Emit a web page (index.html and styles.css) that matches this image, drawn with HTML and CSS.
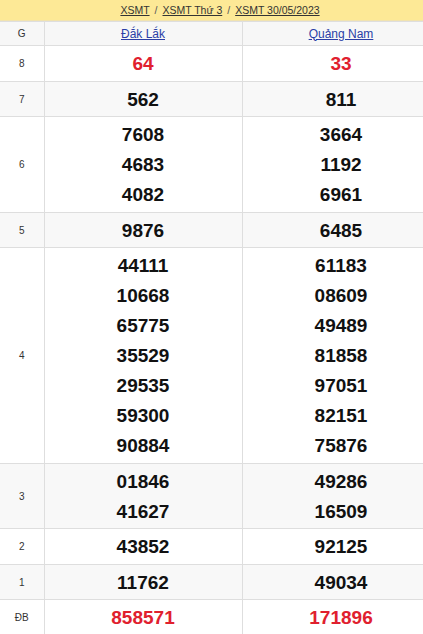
FILE: index.html
```html
<!DOCTYPE html>
<html lang="vi">
<head>
<meta charset="utf-8">
<title>XSMT 30/05/2023</title>
<link rel="stylesheet" href="styles.css">
</head>
<body>
<div class="wrap">
  <div class="crumbs">
    <a href="#">XSMT</a><span class="sep">/</span><a href="#">XSMT Thứ 3</a><span class="sep">/</span><a href="#">XSMT 30/05/2023</a>
  </div>
  <table class="kq">
    <colgroup><col class="c-g"><col class="c-p"><col class="c-p"></colgroup>
    <thead>
      <tr><th class="g">G</th><th><a href="#">Đắk Lắk</a></th><th><a href="#">Quảng Nam</a></th></tr>
    </thead>
    <tbody>
      <tr><td class="g">8</td><td class="red">64</td><td class="red">33</td></tr>
      <tr class="alt"><td class="g">7</td><td>562</td><td>811</td></tr>
      <tr><td class="g">6</td><td>7608<br>4683<br>4082</td><td>3664<br>1192<br>6961</td></tr>
      <tr class="alt"><td class="g">5</td><td>9876</td><td>6485</td></tr>
      <tr><td class="g">4</td><td>44111<br>10668<br>65775<br>35529<br>29535<br>59300<br>90884</td><td>61183<br>08609<br>49489<br>81858<br>97051<br>82151<br>75876</td></tr>
      <tr class="alt"><td class="g">3</td><td>01846<br>41627</td><td>49286<br>16509</td></tr>
      <tr><td class="g">2</td><td>43852</td><td>92125</td></tr>
      <tr class="alt"><td class="g">1</td><td>11762</td><td>49034</td></tr>
      <tr><td class="g">ĐB</td><td class="red">858571</td><td class="red">171896</td></tr>
    </tbody>
  </table>
</div>
</body>
</html>
```
FILE: styles.css
```css
html, body {
  margin: 0;
  padding: 0;
  overflow: hidden;
  background: #fff;
}
body {
  font-family: "Liberation Sans", Arial, sans-serif;
  color: #111;
}
.wrap {
  width: 440px;
}
.crumbs {
  height: 21px;
  background: #fde996;
  text-align: center;
  font-size: 10.5px;
  line-height: 20px;
  border-bottom: 1px solid #f1e3b0;
  box-sizing: border-box;
  color: #444;
}
.crumbs a {
  color: #333;
  text-decoration: underline;
}
.crumbs .sep {
  margin: 0 5px;
  color: #555;
}
.kq {
  width: 440px;
  border-collapse: collapse;
  table-layout: fixed;
}
.c-g { width: 44px; }
.c-p { width: 198px; }
.kq th, .kq td {
  border: 1px solid #dedede;
  text-align: center;
  padding: 0;
}
.kq tr > :first-child { border-left: 0; }
.kq thead tr {
  background: #f7f7f7;
}
.kq th {
  height: 23px;
  font-weight: normal;
  font-size: 12px;
  line-height: 16px;
}
.kq th a {
  color: #2a3ea6;
  text-decoration: underline;
}
.kq th.g, .kq td.g {
  font-size: 10px;
  color: #333;
  font-weight: normal;
  line-height: 14px;
}
.kq td {
  font-size: 19px;
  font-weight: bold;
  line-height: 30px;
  padding: 3px 0 1.5px;
  color: #111;
}
.kq tr.alt {
  background: #f8f8f8;
}
.kq td.red {
  color: #e0202e;
}
```
